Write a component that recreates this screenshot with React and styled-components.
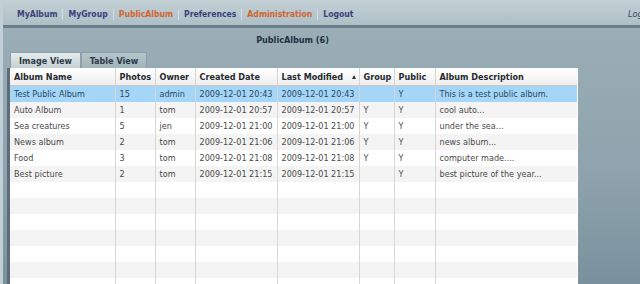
import React from "react";
import styled, { createGlobalStyle } from "styled-components";

const GlobalStyle = createGlobalStyle`
  body {
    margin: 0;
    font-family: "DejaVu Sans Condensed", "DejaVu Sans", Verdana, sans-serif;
  }
`;

const Page = styled.div`
  width: 640px;
  height: 284px;
  overflow: hidden;
  box-sizing: border-box;
  border-left: 3px solid #c2cfd6;
  background: linear-gradient(to bottom, #9db0b8 0%, #8ea3ad 60%, #7a919d 100%);
`;

const NavBar = styled.div`
  display: flex;
  align-items: center;
  height: 28px;
  box-sizing: border-box;
  padding: 3px 0 0 9px;
  background: linear-gradient(to bottom, #c3d0d6, #aebfc6);
  border-bottom: 3px solid #6a7f89;
`;

const NavItem = styled.span`
  font-size: 8.6px;
  font-weight: bold;
  padding: 0 5px 0 5px;
  color: ${(p) => (p.$accent ? "#d0652e" : "#3d3f7a")};
  border-left: ${(p) => (p.$first ? "none" : "1px solid #d6dee2")};
  line-height: 11px;
`;

const LoginLink = styled.span`
  margin-left: auto;
  margin-right: -10px;
  font-size: 9px;
  font-style: italic;
  color: #3d4a5a;
`;

const Content = styled.div`
  padding: 0 62px 0 4px;
`;

const Title = styled.div`
  height: 24px;
  display: flex;
  align-items: center;
  justify-content: center;
  font-size: 9px;
  font-weight: bold;
  color: #1c3242;
`;

const Tabs = styled.div`
  display: flex;
  height: 16px;
  padding-left: 3px;
`;

const Tab = styled.div`
  display: flex;
  align-items: center;
  justify-content: center;
  width: ${(p) => p.$w}px;
  box-sizing: border-box;
  font-size: 9px;
  font-weight: bold;
  color: #2b3947;
  border: 1px solid #8da0a8;
  border-bottom: none;
  background: ${(p) =>
    p.$active
      ? "linear-gradient(to bottom, #e6ecec, #c4d0d2)"
      : "linear-gradient(to bottom, #b4c4ca, #a2b5bc)"};
`;

const TableFrame = styled.div`
  border-left: 3px solid #5d6d77;
  background: #ffffff;
`;

const Grid = styled.table`
  width: 567px;
  border-collapse: collapse;
  table-layout: fixed;
  font-size: 9px;
`;

const HeadCell = styled.th`
  height: 17px;
  padding: 0 0 0 4px;
  text-align: left;
  font-weight: bold;
  color: #262a2e;
  white-space: nowrap;
  background: linear-gradient(to bottom, #ffffff, #eeeeee);
  border-left: 1px solid #d6d6d6;
  border-bottom: 1px solid #c8c8c8;
  &:first-child {
    border-left: none;
  }
`;

const SortArrow = styled.span`
  display: inline-block;
  margin-left: 9px;
  vertical-align: 1px;
  width: 0;
  height: 0;
  border-left: 2px solid transparent;
  border-right: 2px solid transparent;
  border-bottom: 4px solid #333;
`;

const Row = styled.tr`
  height: 16px;
  background: ${(p) =>
    p.$selected ? "#a5d6f7" : p.$even ? "#f4f4f4" : "#ffffff"};
  color: ${(p) => (p.$selected ? "#274866" : "#4a4a4a")};
`;

const Cell = styled.td`
  padding: 0 0 0 4px;
  white-space: nowrap;
  overflow: hidden;
  border-left: 1px solid #d6d6d6;
  &:first-child {
    border-left: none;
  }
`;

const columns = [
  { name: "Album Name", width: 105 },
  { name: "Photos", width: 40 },
  { name: "Owner", width: 40 },
  { name: "Created Date", width: 82 },
  { name: "Last Modified", width: 82, sorted: true },
  { name: "Group", width: 35 },
  { name: "Public", width: 41 },
  { name: "Album Description", width: 142 },
];

const albums = [
  ["Test Public Album", "15", "admin", "2009-12-01 20:43", "2009-12-01 20:43", "", "Y", "This is a test public album."],
  ["Auto Album", "1", "tom", "2009-12-01 20:57", "2009-12-01 20:57", "Y", "Y", "cool auto..."],
  ["Sea creatures", "5", "jen", "2009-12-01 21:00", "2009-12-01 21:00", "Y", "Y", "under the sea..."],
  ["News album", "2", "tom", "2009-12-01 21:06", "2009-12-01 21:06", "Y", "Y", "news album..."],
  ["Food", "3", "tom", "2009-12-01 21:08", "2009-12-01 21:08", "Y", "Y", "computer made...."],
  ["Best picture", "2", "tom", "2009-12-01 21:15", "2009-12-01 21:15", "", "Y", "best picture of the year..."],
];

const navLinks = [
  { label: "MyAlbum" },
  { label: "MyGroup" },
  { label: "PublicAlbum", accent: true },
  { label: "Preferences" },
  { label: "Administration", accent: true },
  { label: "Logout" },
];

const emptyRows = Array.from({ length: 8 }, () => Array(8).fill(""));

export default function App() {
  const rows = [...albums, ...emptyRows];
  return (
    <>
      <GlobalStyle />
      <Page>
        <NavBar>
          {navLinks.map((l, i) => (
            <NavItem key={l.label} $accent={l.accent} $first={i === 0}>
              {l.label}
            </NavItem>
          ))}
          <LoginLink>Login</LoginLink>
        </NavBar>
        <Content>
          <Title>PublicAlbum (6)</Title>
          <Tabs>
            <Tab $active $w={71}>Image View</Tab>
            <Tab $w={66}>Table View</Tab>
          </Tabs>
          <TableFrame>
            <Grid>
              <colgroup>
                {columns.map((c) => (
                  <col key={c.name} style={{ width: c.width }} />
                ))}
              </colgroup>
              <thead>
                <tr>
                  {columns.map((c) => (
                    <HeadCell key={c.name}>
                      {c.name}
                      {c.sorted && <SortArrow />}
                    </HeadCell>
                  ))}
                </tr>
              </thead>
              <tbody>
                {rows.map((r, i) => (
                  <Row key={i} $selected={i === 0} $even={i % 2 === 1}>
                    {r.map((v, j) => (
                      <Cell key={j}>{v}</Cell>
                    ))}
                  </Row>
                ))}
              </tbody>
            </Grid>
          </TableFrame>
        </Content>
      </Page>
    </>
  );
}
